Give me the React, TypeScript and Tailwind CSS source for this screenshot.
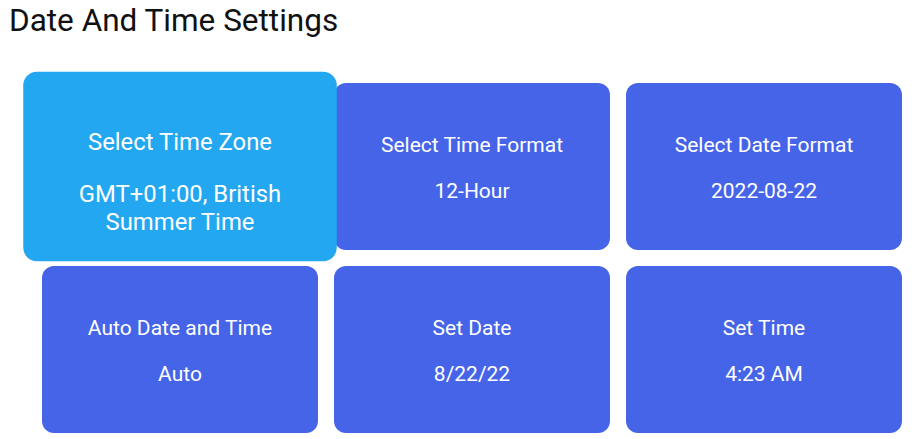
const cards = [
  { label: "Select Time Zone", value: "GMT+01:00, British Summer Time", focused: true },
  { label: "Select Time Format", value: "12-Hour" },
  { label: "Select Date Format", value: "2022-08-22" },
  { label: "Auto Date and Time", value: "Auto" },
  { label: "Set Date", value: "8/22/22" },
  { label: "Set Time", value: "4:23 AM" },
];

export default function App() {
  return (
    <div className="w-[914px] h-[439px] bg-white overflow-hidden font-['Roboto',sans-serif]">
      {/* 标题 */}
      <h1 className="ml-[9px] mt-[3px] text-[31.5px] leading-[36px] text-[#111]">
        Date And Time Settings
      </h1>

      {/* 设置卡片 */}
      <div className="ml-[42px] mt-[44px] w-[860px] grid grid-cols-3 gap-4">
        {cards.map((card) => (
          <div
            key={card.label}
            className={`h-[167px] rounded-xl flex flex-col items-center pt-[50px] px-3 text-center text-white text-[21px] leading-[24px] ${
              card.focused
                ? "relative z-10 scale-[1.136] bg-[#22a7f0]"
                : "bg-[#4664e8]"
            }`}
          >
            <div>{card.label}</div>
            <div className="mt-[22px]">{card.value}</div>
          </div>
        ))}
      </div>
    </div>
  );
}
